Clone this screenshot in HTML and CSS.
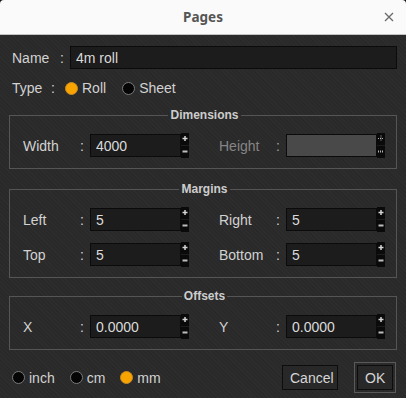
FILE: index.html
```html
<!DOCTYPE html>
<html lang="en">
<head>
    <meta charset="UTF-8">
    <title>Pages</title>
    <link rel="stylesheet" href="styles.css">
</head>
<body>

    <div class="dialog">
        <!-- Title Bar -->
        <div class="titlebar">
            <span></span>
            <span class="title">Pages</span>
            <svg class="close" width="10" height="10" viewBox="0 0 10 10">
                <path d="M1 1 L9 9 M9 1 L1 9" stroke="#6a6a6a" stroke-width="1.3" fill="none"/>
            </svg>
        </div>

        <div class="content">
            <!-- Name -->
            <div class="row name-row">
                <span class="label name-label">Name</span>
                <span class="colon">:</span>
                <input class="text name-input" type="text" value="4m roll">
            </div>

            <!-- Type -->
            <div class="row type-row">
                <span class="label type-label">Type</span>
                <span class="colon">:</span>
                <label class="radio"><span class="dot on"></span>Roll</label>
                <label class="radio"><span class="dot"></span>Sheet</label>
            </div>

            <!-- Dimensions -->
            <fieldset class="group dims">
                <legend>Dimensions</legend>
                <div class="fields">
                    <div class="field">
                        <span class="flabel">Width</span>
                        <span class="fcolon">:</span>
                        <input class="num" type="text" value="4000">
                        <svg class="spin" width="8" height="25" viewBox="0 0 8 25">
                            <rect width="8" height="25" fill="#0a0a0a"/>
                            <rect y="12" width="8" height="1" fill="#1d1d1d"/>
                            <path d="M4 3 V8 M1.5 5.5 H6.5" stroke="#d4d4d4" stroke-width="1.5" fill="none"/>
                            <path d="M1.5 18.5 H6.5" stroke="#bdbdbd" stroke-width="2" fill="none"/>
                        </svg>
                    </div>
                    <div class="field disabled">
                        <span class="flabel">Height</span>
                        <span class="fcolon">:</span>
                        <input class="num" type="text" value="" disabled>
                        <svg class="spin" width="8" height="25" viewBox="0 0 8 25">
                            <rect width="8" height="25" fill="#0a0a0a"/>
                            <rect y="12" width="8" height="1" fill="#1d1d1d"/>
                            <path d="M4 2.5 V8.5 M1 5.5 H7" stroke="#b4b4b4" stroke-width="1" stroke-dasharray="1 1" fill="none"/>
                            <path d="M1 18.5 H7" stroke="#b4b4b4" stroke-width="2" stroke-dasharray="1 1" fill="none"/>
                        </svg>
                    </div>
                </div>
            </fieldset>

            <!-- Margins -->
            <fieldset class="group margins">
                <legend>Margins</legend>
                <div class="fields">
                    <div class="field">
                        <span class="flabel">Left</span>
                        <span class="fcolon">:</span>
                        <input class="num" type="text" value="5">
                        <svg class="spin" width="8" height="25" viewBox="0 0 8 25">
                            <rect width="8" height="25" fill="#0a0a0a"/>
                            <rect y="12" width="8" height="1" fill="#1d1d1d"/>
                            <path d="M4 3 V8 M1.5 5.5 H6.5" stroke="#d4d4d4" stroke-width="1.5" fill="none"/>
                            <path d="M1.5 18.5 H6.5" stroke="#bdbdbd" stroke-width="2" fill="none"/>
                        </svg>
                    </div>
                    <div class="field">
                        <span class="flabel">Right</span>
                        <span class="fcolon">:</span>
                        <input class="num" type="text" value="5">
                        <svg class="spin" width="8" height="25" viewBox="0 0 8 25">
                            <rect width="8" height="25" fill="#0a0a0a"/>
                            <rect y="12" width="8" height="1" fill="#1d1d1d"/>
                            <path d="M4 3 V8 M1.5 5.5 H6.5" stroke="#d4d4d4" stroke-width="1.5" fill="none"/>
                            <path d="M1.5 18.5 H6.5" stroke="#bdbdbd" stroke-width="2" fill="none"/>
                        </svg>
                    </div>
                    <div class="field">
                        <span class="flabel">Top</span>
                        <span class="fcolon">:</span>
                        <input class="num" type="text" value="5">
                        <svg class="spin" width="8" height="25" viewBox="0 0 8 25">
                            <rect width="8" height="25" fill="#0a0a0a"/>
                            <rect y="12" width="8" height="1" fill="#1d1d1d"/>
                            <path d="M4 3 V8 M1.5 5.5 H6.5" stroke="#d4d4d4" stroke-width="1.5" fill="none"/>
                            <path d="M1.5 18.5 H6.5" stroke="#bdbdbd" stroke-width="2" fill="none"/>
                        </svg>
                    </div>
                    <div class="field">
                        <span class="flabel">Bottom</span>
                        <span class="fcolon">:</span>
                        <input class="num" type="text" value="5">
                        <svg class="spin" width="8" height="25" viewBox="0 0 8 25">
                            <rect width="8" height="25" fill="#0a0a0a"/>
                            <rect y="12" width="8" height="1" fill="#1d1d1d"/>
                            <path d="M4 3 V8 M1.5 5.5 H6.5" stroke="#d4d4d4" stroke-width="1.5" fill="none"/>
                            <path d="M1.5 18.5 H6.5" stroke="#bdbdbd" stroke-width="2" fill="none"/>
                        </svg>
                    </div>
                </div>
            </fieldset>

            <!-- Offsets -->
            <fieldset class="group offsets">
                <legend>Offsets</legend>
                <div class="fields">
                    <div class="field">
                        <span class="flabel">X</span>
                        <span class="fcolon">:</span>
                        <input class="num" type="text" value="0.0000">
                        <svg class="spin" width="8" height="25" viewBox="0 0 8 25">
                            <rect width="8" height="25" fill="#0a0a0a"/>
                            <rect y="12" width="8" height="1" fill="#1d1d1d"/>
                            <path d="M4 3 V8 M1.5 5.5 H6.5" stroke="#d4d4d4" stroke-width="1.5" fill="none"/>
                            <path d="M1.5 18.5 H6.5" stroke="#bdbdbd" stroke-width="2" fill="none"/>
                        </svg>
                    </div>
                    <div class="field">
                        <span class="flabel">Y</span>
                        <span class="fcolon">:</span>
                        <input class="num" type="text" value="0.0000">
                        <svg class="spin" width="8" height="25" viewBox="0 0 8 25">
                            <rect width="8" height="25" fill="#0a0a0a"/>
                            <rect y="12" width="8" height="1" fill="#1d1d1d"/>
                            <path d="M4 3 V8 M1.5 5.5 H6.5" stroke="#d4d4d4" stroke-width="1.5" fill="none"/>
                            <path d="M1.5 18.5 H6.5" stroke="#bdbdbd" stroke-width="2" fill="none"/>
                        </svg>
                    </div>
                </div>
            </fieldset>

            <!-- Units and Buttons -->
            <div class="footer">
                <div class="units">
                    <label class="radio"><span class="dot"></span>inch</label>
                    <label class="radio"><span class="dot"></span>cm</label>
                    <label class="radio"><span class="dot on"></span>mm</label>
                </div>
                <div class="buttons">
                    <button class="btn cancel">Cancel</button>
                    <button class="btn ok">OK</button>
                </div>
            </div>
        </div>
    </div>

</body>
</html>
```

FILE: styles.css
```css
/* General Styles */
html {
    background: #111;
}

body {
    margin: 0;
    padding: 0;
    font-family: "Liberation Sans", Arial, sans-serif;
    font-size: 14px;
    color: #d2d2d2;
}

/* Dialog */
.dialog {
    width: 406px;
    height: 398px;
    border-radius: 4px 4px 0 0;
    overflow: hidden;
    background-color: #2b2b2b;
    background-image: repeating-linear-gradient(45deg, #2a2a2a 0 1px, #2d2d2d 1px 2px, #292929 2px 3px);
}

/* Title Bar */
.titlebar {
    height: 34px;
    background: #fafafa;
    border-bottom: 1px solid #c4c4c4;
    display: grid;
    grid-template-columns: 1fr auto 1fr;
    align-items: center;
}

.title {
    font-family: "Noto Sans", "Open Sans", sans-serif;
    font-weight: bold;
    font-size: 13.5px;
    color: #555;
}

.close {
    justify-self: end;
    margin-right: 12px;
}

/* Content */
.content {
    padding: 11px 9px 0 9px;
    display: flex;
    flex-direction: column;
}

.row {
    display: flex;
    align-items: center;
}

.label {
    padding-left: 3px;
}

.name-row {
    height: 23px;
}

.name-label {
    width: 48px;
}

.name-row .colon {
    width: 10px;
}

.text {
    flex: 1;
    height: 23px;
    box-sizing: border-box;
    margin: 0;
    padding: 0 5px;
    border: 1px solid #0b0b0b;
    background: #1c1c1c;
    color: #dadada;
    font-family: "Liberation Sans", Arial, sans-serif;
    font-size: 14px;
    outline: none;
}

.type-row {
    height: 16px;
    margin-top: 11px;
}

.type-label {
    width: 39px;
}

.type-row .colon {
    width: 14px;
}

/* Radios */
.radio {
    display: flex;
    align-items: center;
    gap: 4px;
    margin-right: 16px;
}

.dot {
    width: 11px;
    height: 11px;
    border-radius: 50%;
    background: #050505;
    border: 1px solid #7a7a7a;
}

.dot.on {
    background: #f7a300;
    border-color: #c98a22;
}

/* Group Boxes */
.group {
    margin: 0;
    padding: 11px 10px 10px 13px;
    border: 1px solid #555;
    min-width: 0;
}

.group legend {
    margin: 0 auto;
    padding: 0 2px;
    font-weight: bold;
    font-size: 12px;
    line-height: 14px;
    color: #cdcdcd;
}

.dims {
    margin-top: 12px;
}

.margins {
    margin-top: 13px;
}

.offsets {
    margin-top: 11px;
}

.fields {
    display: grid;
    grid-template-columns: 167px 167px;
    column-gap: 29px;
    row-gap: 10px;
}

.field {
    display: flex;
    align-items: center;
    height: 25px;
}

.flabel {
    width: 57px;
}

.fcolon {
    width: 10px;
}

.num {
    width: 91px;
    height: 23px;
    box-sizing: border-box;
    margin: 0;
    padding: 0 5px;
    border: 1px solid #0b0b0b;
    background: #1c1c1c;
    color: #dadada;
    font-family: "Liberation Sans", Arial, sans-serif;
    font-size: 14px;
    outline: none;
}

.spin {
    display: block;
}

.disabled .flabel {
    color: #858585;
}

.disabled .fcolon {
    color: #a0a0a0;
}

.disabled .num {
    background: #494949;
}

/* Footer */
.footer {
    display: flex;
    justify-content: space-between;
    align-items: center;
    margin-top: 15px;
    padding-left: 3px;
}

.units {
    display: flex;
    align-items: center;
}

.units .radio {
    margin-right: 15px;
}

.buttons {
    display: flex;
    align-items: center;
    gap: 19px;
    padding-right: 4px;
}

.btn {
    height: 25px;
    margin: 0;
    padding: 0 7px;
    border: 1px solid #0d0d0d;
    background: #282828;
    color: #d6d6d6;
    font-family: "Liberation Sans", Arial, sans-serif;
    font-size: 14px;
    cursor: pointer;
}

.cancel {
    width: 56px;
}

.ok {
    width: 36px;
    outline: 1px solid #5a5a5a;
    outline-offset: 2px;
}
```
